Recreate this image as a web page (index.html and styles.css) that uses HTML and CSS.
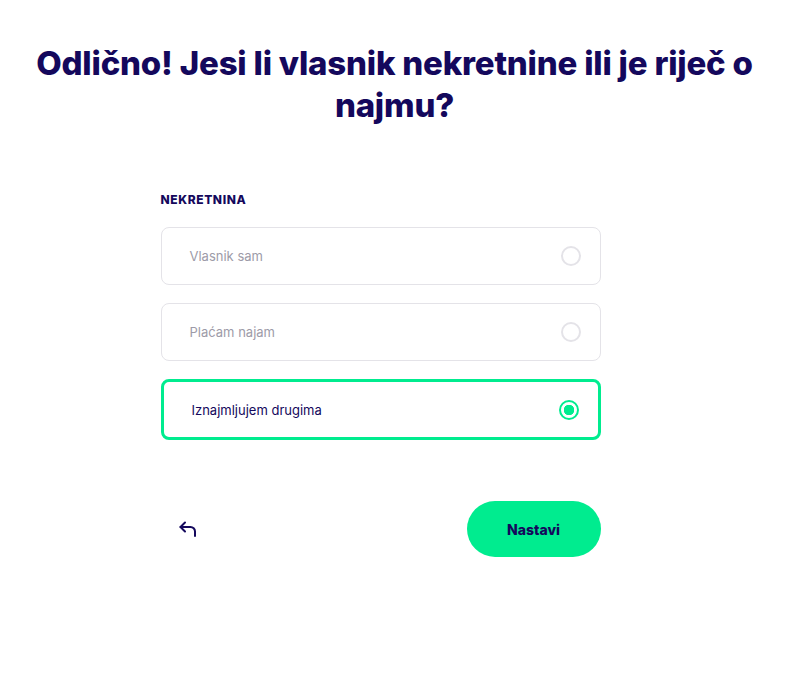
FILE: index.html
```html
<!DOCTYPE html>
<html>
<head>
    <title>Nekretnina</title>
    <link rel="stylesheet" href="styles.css">
</head>
<body>
    <div class="page">
        <h1 class="title">Odlično! Jesi li vlasnik nekretnine ili je riječ o najmu?</h1>

        <form class="form" name="fm">
            <div class="label">NEKRETNINA</div>

            <label class="option">
                <span class="option-text">Vlasnik sam</span>
                <span class="radio"></span>
            </label>

            <label class="option">
                <span class="option-text">Plaćam najam</span>
                <span class="radio"></span>
            </label>

            <label class="option selected">
                <span class="option-text">Iznajmljujem drugima</span>
                <span class="radio"></span>
            </label>

            <div class="actions">
                <button type="button" class="back" aria-label="Natrag">
                    <svg width="18" height="16" viewBox="0 0 18 16" fill="none" stroke="#14085c" stroke-width="2" stroke-linecap="round" stroke-linejoin="round">
                        <path d="M6 1.5 L1.5 6 L6 10.5"/>
                        <path d="M1.5 6 H11.5 A4.5 4.5 0 0 1 16 10.5 V15"/>
                    </svg>
                </button>
                <button type="button" class="next">Nastavi</button>
            </div>
        </form>
    </div>
</body>
</html>
```

FILE: styles.css
```css
body {
    margin: 0;
    background: #ffffff;
    font-family: Inter, "Noto Sans", sans-serif;
    color: #14085c;
}
.page {
    padding-top: 42px;
}
.title {
    margin: 0 auto;
    max-width: 740px;
    text-align: center;
    font-size: 33px;
    line-height: 42px;
    font-weight: 800;
    letter-spacing: -0.2px;
    color: #14085c;
}
.form {
    width: 440px;
    margin: 66px 0 0 calc(50% - 234px);
}
.label {
    font-size: 12px;
    font-weight: 800;
    letter-spacing: 0.6px;
    margin-bottom: 20px;
}
.option {
    display: flex;
    align-items: center;
    justify-content: space-between;
    height: 56px;
    padding: 0 19px 0 28px;
    border: 1px solid #e4e3e8;
    border-radius: 8px;
    margin-bottom: 18px;
    cursor: pointer;
}
.option-text {
    font-size: 13px;
    color: #9d9ba8;
}
.radio {
    width: 16px;
    height: 16px;
    border: 2px solid #e4e3e8;
    border-radius: 50%;
    box-sizing: content-box;
}
.option.selected {
    height: 55px;
    border: 3px solid #00ec8f;
    padding: 0 19px 0 28px;
}
.option.selected .option-text {
    color: #14085c;
}
.option.selected .radio {
    border-color: #00ec8f;
    background: radial-gradient(circle, #00ec8f 0, #00ec8f 5px, #ffffff 5.5px);
}
.actions {
    display: flex;
    align-items: center;
    justify-content: space-between;
    margin-top: 61px;
}
.back {
    background: none;
    border: none;
    padding: 0 0 0 18px;
    cursor: pointer;
    display: flex;
}
.next {
    width: 134px;
    height: 56px;
    border: none;
    border-radius: 28px;
    background: #00ec8f;
    color: #14085c;
    font-family: Inter, "Noto Sans", sans-serif;
    font-size: 14px;
    font-weight: 800;
    cursor: pointer;
}
```
